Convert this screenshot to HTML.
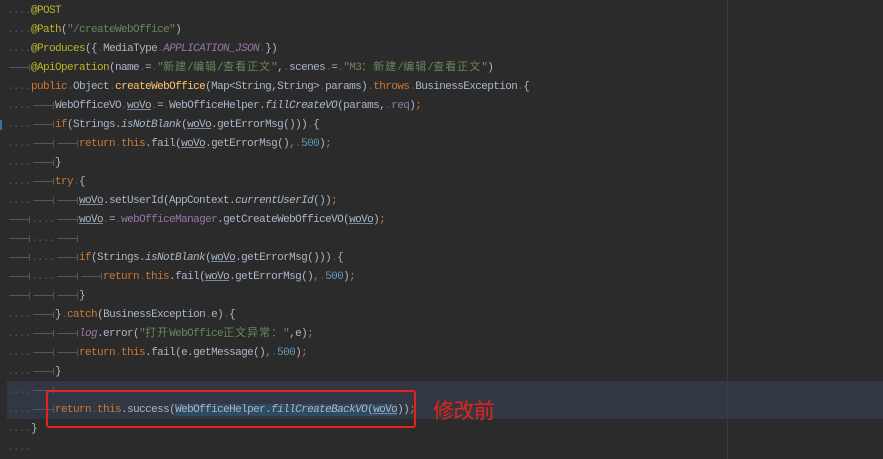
<!DOCTYPE html>
<html><head><meta charset="utf-8"><style>
html,body{margin:0;padding:0;width:883px;height:459px;overflow:hidden;background:#2b2b2b;}
body{position:relative;font-family:"Liberation Mono","Noto Sans CJK SC",monospace;font-size:11px;letter-spacing:-0.6px;color:#a9b7c6;}
.l{position:absolute;left:7px;height:19px;line-height:19px;white-space:pre;}
.c{letter-spacing:1px;font-size:11px;}
i{font-style:normal;color:#555;}
s{display:inline-block;width:24px;height:9px;vertical-align:middle;position:relative;text-decoration:none;}
s:before{content:"";position:absolute;left:2px;right:2px;top:4px;height:1px;background:#575757;}
s:after{content:"";position:absolute;right:1px;top:1px;width:1px;height:7px;background:#575757;}
.k{color:#cc7832}.a{color:#bbb529}.s{color:#6a8759}.p{color:#9876aa}.n{color:#6897bb}.m{color:#ffc66d}
.it{font-style:italic}.u{text-decoration:underline;text-decoration-color:#7a8a9a}
.hl{position:absolute;left:7px;width:876px;top:381px;height:38px;background:#323843;}
.sel{background:#2f4a63;}
</style></head><body>
<div class="hl"></div>
<div style="position:absolute;left:727px;top:0;width:1px;height:459px;background:#3c3c3c"></div>
<div style="position:absolute;left:0;top:120px;width:2px;height:10px;background:#3a6ea5"></div>
<div class="l" style="top:2px"><i>....</i><span class="a">@POST</span></div>
<div class="l" style="top:21px"><i>....</i><span class="a">@Path</span>(<span class="s">"/createWebOffice"</span>)</div>
<div class="l" style="top:40px"><i>....</i><span class="a">@Produces</span>({<i>.</i>MediaType<i>.</i><span class="p it">APPLICATION_JSON</span><i>.</i>})</div>
<div class="l" style="top:59px"><s></s><span class="a">@ApiOperation</span>(name<i>.</i>=<i>.</i><span class="s">"<span class="c">新建</span>/<span class="c">编辑</span>/<span class="c">查看正文</span>"</span>,<i>.</i>scenes<i>.</i>=<i>.</i><span class="s">"M3<span class="c">：新建</span>/<span class="c">编辑</span>/<span class="c">查看正文</span>"</span>)</div>
<div class="l" style="top:78px"><i>....</i><span class="k">public</span><i>.</i>Object<i>.</i><span class="m">createWebOffice</span>(Map&lt;String,String&gt;<i>.</i>params)<i>.</i><span class="k">throws</span><i>.</i>BusinessException<i>.</i>{</div>
<div class="l" style="top:97px"><i>....</i><s></s>WebOfficeVO<i>.</i><span class="u">woVo</span><i>.</i>=<i>.</i>WebOfficeHelper.<span class="it">fillCreateVO</span>(params,<i>.</i><span class="p">req</span>)<span class="k">;</span></div>
<div class="l" style="top:116px"><i>....</i><s></s><span class="k">if</span>(Strings.<span class="it">isNotBlank</span>(<span class="u">woVo</span>.getErrorMsg()))<i>.</i>{</div>
<div class="l" style="top:135px"><i>....</i><s></s><s></s><span class="k">return</span><i>.</i><span class="k">this</span>.fail(<span class="u">woVo</span>.getErrorMsg()<span class="k">,</span><i>.</i><span class="n">500</span>)<span class="k">;</span></div>
<div class="l" style="top:154px"><i>....</i><s></s>}</div>
<div class="l" style="top:173px"><i>....</i><s></s><span class="k">try</span><i>.</i>{</div>
<div class="l" style="top:192px"><i>....</i><s></s><s></s><span class="u">woVo</span>.setUserId(AppContext.<span class="it">currentUserId</span>())<span class="k">;</span></div>
<div class="l" style="top:211px"><s></s><i>....</i><s></s><span class="u">woVo</span><i>.</i>=<i>.</i><span class="p">webOfficeManager</span>.getCreateWebOfficeVO(<span class="u">woVo</span>)<span class="k">;</span></div>
<div class="l" style="top:230px"><s></s><i>....</i><s></s></div>
<div class="l" style="top:249px"><s></s><i>....</i><s></s><span class="k">if</span>(Strings.<span class="it">isNotBlank</span>(<span class="u">woVo</span>.getErrorMsg()))<i>.</i>{</div>
<div class="l" style="top:268px"><s></s><i>....</i><s></s><s></s><span class="k">return</span><i>.</i><span class="k">this</span>.fail(<span class="u">woVo</span>.getErrorMsg()<span class="k">,</span><i>.</i><span class="n">500</span>)<span class="k">;</span></div>
<div class="l" style="top:287px"><s></s><s></s><s></s>}</div>
<div class="l" style="top:306px"><i>....</i><s></s>}<i>.</i><span class="k">catch</span>(BusinessException<i>.</i>e)<i>.</i>{</div>
<div class="l" style="top:325px"><i>....</i><s></s><s></s><span class="p it">log</span>.error(<span class="s">"<span class="c">打开</span>WebOffice<span class="c">正文异常：</span>"</span>,e)<span class="k">;</span></div>
<div class="l" style="top:344px"><i>....</i><s></s><s></s><span class="k">return</span><i>.</i><span class="k">this</span>.fail(e.getMessage()<span class="k">,</span><i>.</i><span class="n">500</span>)<span class="k">;</span></div>
<div class="l" style="top:363px"><i>....</i><s></s>}</div>
<div class="l" style="top:382px"><i>....</i><s></s></div>
<div class="l" style="top:401px"><i>....</i><s></s><span class="k">return</span><i>.</i><span class="k">this</span>.success(<span class="sel">WebOfficeHelper.<span class="it">fillCreateBackVO</span>(<span class="u">woVo</span></span>))<span class="k">;</span></div>
<div class="l" style="top:420px"><i>....</i>}</div>
<div class="l" style="top:439px"><i>....</i></div>
<div style="position:absolute;left:46px;top:390px;width:366px;height:34px;border:2px solid #e8211b;border-radius:3px;"></div>
<div style="position:absolute;left:433px;top:397px;font-family:'Noto Sans CJK SC',sans-serif;font-size:21px;line-height:26px;color:#e8211b;">修改前</div>
</body></html>
